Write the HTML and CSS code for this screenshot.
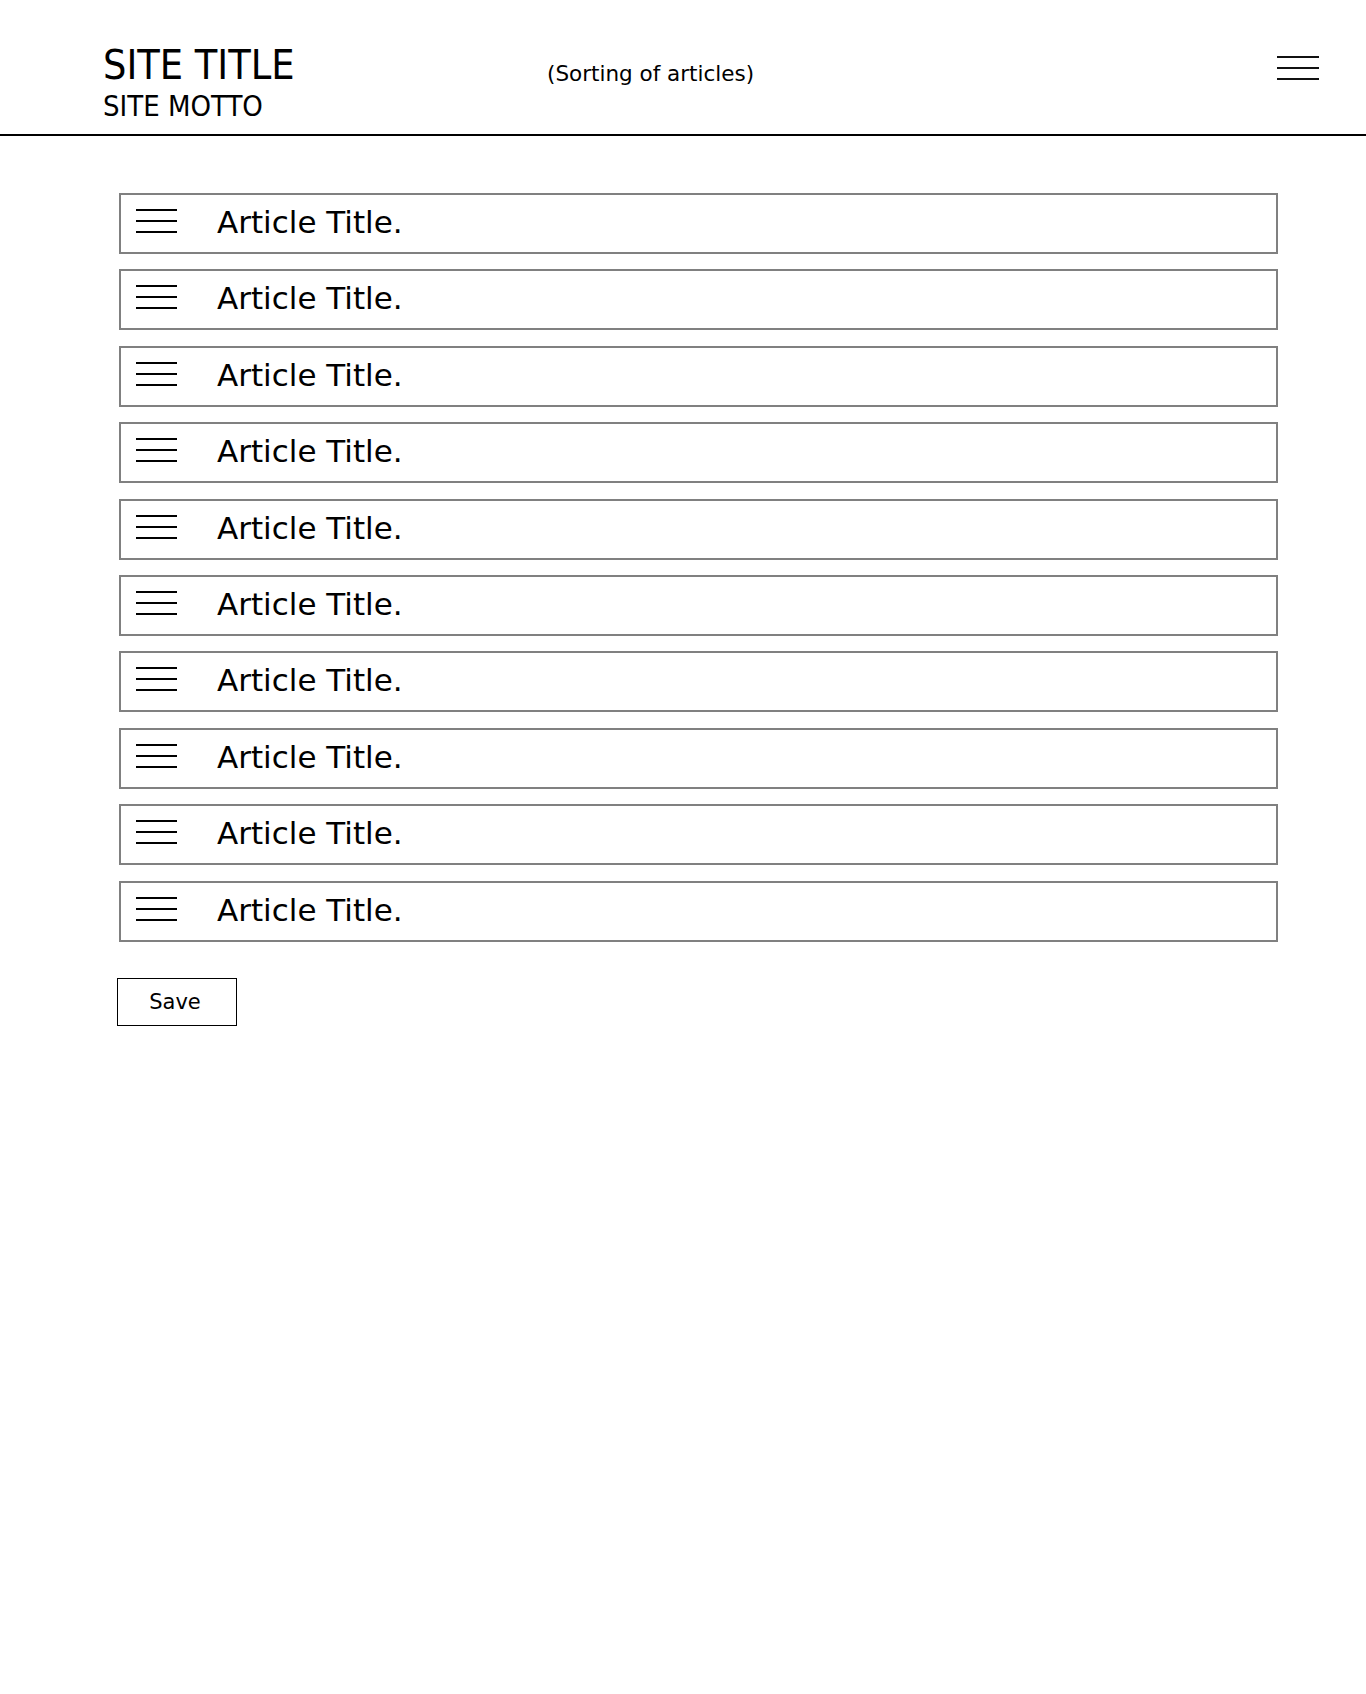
FILE: index.html
```
<!DOCTYPE html>
<html lang="en">
<head>
<meta charset="utf-8">
<title>Sorting of articles</title>
<link rel="stylesheet" href="styles.css">
</head>
<body>
<header class="site-header">
  <div class="brand">
    <div class="site-title">SITE TITLE</div>
    <div class="site-motto">SITE MOTTO</div>
  </div>
  <div class="page-label">(Sorting of articles)</div>
  <div class="menu-btn"><span></span><span></span><span></span></div>
</header>
<main class="content">
  <ul class="article-list">
    <li class="article-row"><span class="handle"><i></i><i></i><i></i></span><span class="article-title">Article Title.</span></li>
    <li class="article-row"><span class="handle"><i></i><i></i><i></i></span><span class="article-title">Article Title.</span></li>
    <li class="article-row"><span class="handle"><i></i><i></i><i></i></span><span class="article-title">Article Title.</span></li>
    <li class="article-row"><span class="handle"><i></i><i></i><i></i></span><span class="article-title">Article Title.</span></li>
    <li class="article-row"><span class="handle"><i></i><i></i><i></i></span><span class="article-title">Article Title.</span></li>
    <li class="article-row"><span class="handle"><i></i><i></i><i></i></span><span class="article-title">Article Title.</span></li>
    <li class="article-row"><span class="handle"><i></i><i></i><i></i></span><span class="article-title">Article Title.</span></li>
    <li class="article-row"><span class="handle"><i></i><i></i><i></i></span><span class="article-title">Article Title.</span></li>
    <li class="article-row"><span class="handle"><i></i><i></i><i></i></span><span class="article-title">Article Title.</span></li>
    <li class="article-row"><span class="handle"><i></i><i></i><i></i></span><span class="article-title">Article Title.</span></li>
  </ul>
  <button class="save-btn" type="button">Save</button>
</main>
</body>
</html>
```
FILE: styles.css
```
html, body {
  margin: 0;
  padding: 0;
  background: #fff;
  color: #000;
  font-family: "DejaVu Sans", Verdana, sans-serif;
}

.site-header {
  height: 134px;
  border-bottom: 2px solid #000;
  display: flex;
  align-items: flex-start;
  padding: 0 47px 0 103px;
  box-sizing: content-box;
}

.brand {
  width: 444px;
  padding-top: 42px;
  font-family: "DejaVu Sans Condensed", "DejaVu Sans", sans-serif;
  font-stretch: condensed;
}

.site-title {
  font-size: 41px;
  line-height: 46px;
}

.site-motto {
  font-size: 29px;
  line-height: 36px;
}

.page-label {
  flex: 1;
  padding-top: 61px;
  font-size: 21.5px;
  line-height: 26px;
}

.menu-btn {
  width: 42px;
  padding-top: 56px;
  display: flex;
  flex-direction: column;
  gap: 9px;
}

.menu-btn span {
  display: block;
  height: 2px;
  background: #111;
}

.content {
  padding: 57px 88px 0 119px;
}

.article-list {
  list-style: none;
  margin: 0;
  padding: 0;
  display: flex;
  flex-direction: column;
  gap: 15.4px;
}

.article-row {
  box-sizing: border-box;
  height: 61px;
  border: 2px solid #808080;
  display: flex;
  align-items: center;
  padding-left: 15px;
}

.handle {
  align-self: flex-start;
  margin-top: 14px;
  width: 41px;
  display: flex;
  flex-direction: column;
  gap: 9px;
  margin-right: 40px;
}

.handle i {
  display: block;
  height: 2px;
  background: #000;
}

.article-title {
  font-size: 31px;
  line-height: 34px;
  margin-top: -3px;
}

.save-btn {
  margin: 36px 0 0 -2px;
  width: 120px;
  height: 48px;
  border: 1px solid #000;
  background: #fff;
  font-family: "DejaVu Sans", Verdana, sans-serif;
  font-size: 21px;
  color: #000;
  padding: 0 4px 0 0;
}
```
